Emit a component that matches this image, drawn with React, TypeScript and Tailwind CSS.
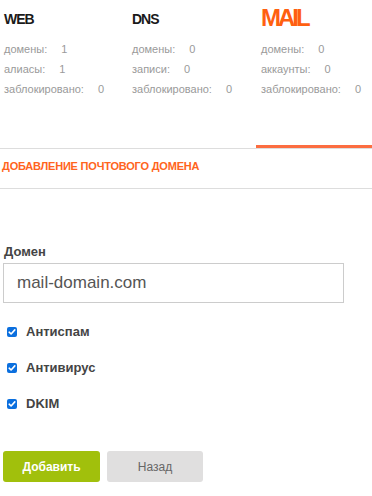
import React from "react";

const font = { fontFamily: '"Liberation Sans", Arial, sans-serif' };

function Stat({ label, value }: { label: string; value: string }) {
  return (
    <div className="flex text-[11px] leading-[20px] text-[#9a9a9a] whitespace-nowrap">
      <span>{label}</span>
      <span className="ml-[14px]">{value}</span>
    </div>
  );
}

function Check({ label }: { label: string }) {
  return (
    <label className="flex items-center h-[16px]">
      <span className="ml-[7px] w-[10px] h-[10px] rounded-[2px] bg-[#0b6fde] flex items-center justify-center">
        <svg width="8" height="8" viewBox="0 0 8 8">
          <path d="M1.2 4.2 L3.1 6 L6.8 1.9" stroke="#fff" strokeWidth="1.6" fill="none" strokeLinecap="round" strokeLinejoin="round" />
        </svg>
      </span>
      <span className="ml-[9px] text-[13px] font-bold text-[#444] leading-[16px]">{label}</span>
    </label>
  );
}

export default function App() {
  return (
    <div className="w-[372px] h-[496px] bg-white overflow-hidden" style={font}>
      <div className="flex h-[149px] border-b border-[#dddddd]">
        <div className="w-[128px] pl-[4px]">
          <div className="h-[39px] pt-[11px] text-[14px] leading-[16px] font-bold text-[#1a1a1a] tracking-[-1px]">WEB</div>
          <Stat label="домены:" value="1" />
          <Stat label="алиасы:" value="1" />
          <Stat label="заблокировано:" value="0" />
        </div>
        <div className="w-[128px] pl-[4px]">
          <div className="h-[39px] pt-[11px] text-[14px] leading-[16px] font-bold text-[#1a1a1a] tracking-[-1px]">DNS</div>
          <Stat label="домены:" value="0" />
          <Stat label="записи:" value="0" />
          <Stat label="заблокировано:" value="0" />
        </div>
        <div className="flex-1 pl-[5px] border-b-[3px] border-[#fc6d40]">
          <div className="h-[39px] pt-[4px] text-[24px] leading-[28px] font-bold text-[#ff6010] tracking-[-3px]">MAIL</div>
          <Stat label="домены:" value="0" />
          <Stat label="аккаунты:" value="0" />
          <Stat label="заблокировано:" value="0" />
        </div>
      </div>
      <div className="h-[40px] border-b border-[#dddddd] pl-[2px] pt-[10px] text-[11px] leading-[14px] font-bold text-[#ff6420] tracking-[-0.2px]">
        ДОБАВЛЕНИЕ ПОЧТОВОГО ДОМЕНА
      </div>
      <div className="pl-[3px] pt-[55px]">
        <div className="text-[13px] leading-[16px] font-bold text-[#444] pl-[1px]">Домен</div>
        <div className="mt-[3px] w-[341px] h-[40px] border border-[#cccccc] flex items-center pl-[13px] text-[17px] text-[#555]">
          mail-domain.com
        </div>
      </div>
      <div className="mt-[21px] flex flex-col gap-[20px]">
        <Check label="Антиспам" />
        <Check label="Антивирус" />
        <Check label="DKIM" />
      </div>
      <div className="mt-[39px] flex gap-[7px] pl-[3px]">
        <button className="w-[97px] h-[31px] rounded-[3px] bg-[#a1c00c] text-white font-bold text-[12px]">Добавить</button>
        <button className="w-[96px] h-[31px] rounded-[3px] bg-[#e0dfdf] text-[#666] text-[12px]">Назад</button>
      </div>
    </div>
  );
}
